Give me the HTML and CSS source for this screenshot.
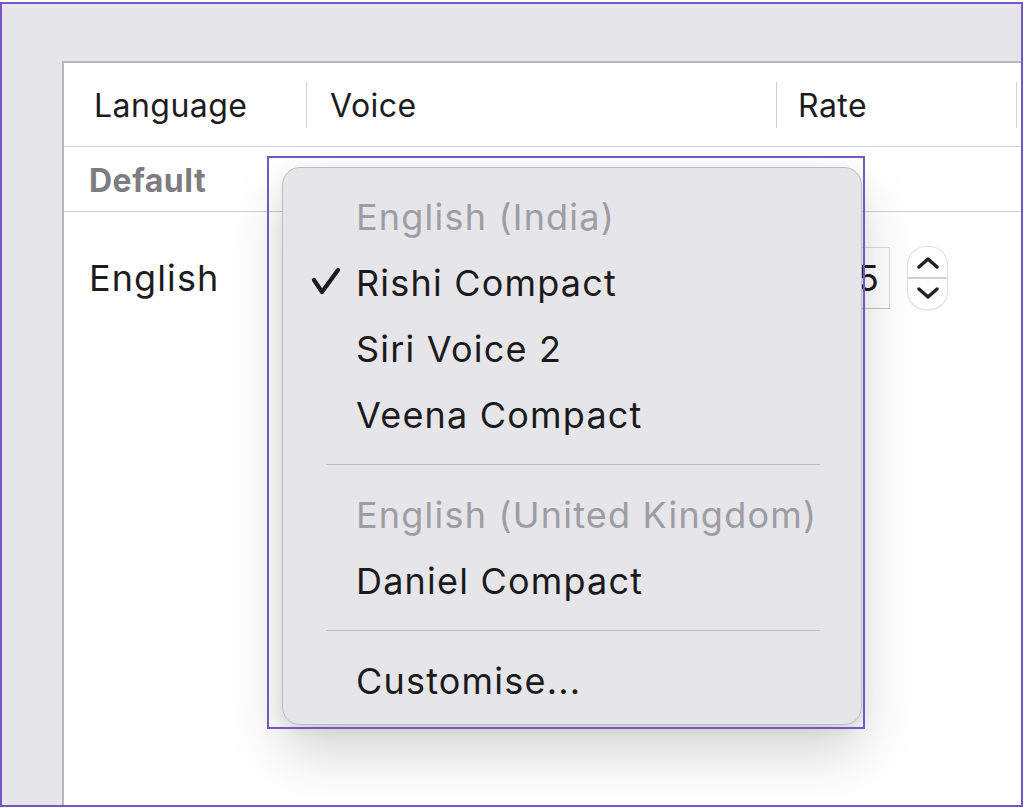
FILE: index.html
```html
<!DOCTYPE html>
<html lang="en">
<head>
<meta charset="utf-8">
<title>Voice settings</title>
<link rel="stylesheet" href="styles.css">
</head>
<body>
<div class="frame">
  <div class="panel">
    <div class="thead">
      <div class="th th-lang">Language</div>
      <div class="sep"></div>
      <div class="th th-voice">Voice</div>
      <div class="sep"></div>
      <div class="th th-rate">Rate</div>
      <div class="sep"></div>
      <div class="th th-rest"></div>
    </div>
    <div class="group-row">Default</div>
    <div class="row">
      <div class="cell-lang">English</div>
      <div class="cell-voice"></div>
      <div class="cell-rate">
        <div class="field">5</div>
        <div class="stepper">
          <div class="step step-up">
            <svg width="22" height="12" viewBox="0 0 22 12"><path d="M2 10 L11 2 L20 10" fill="none" stroke="#222" stroke-width="3.4" stroke-linecap="round" stroke-linejoin="round"/></svg>
          </div>
          <div class="step-div"></div>
          <div class="step step-down">
            <svg width="22" height="12" viewBox="0 0 22 12"><path d="M2 2 L11 10 L20 2" fill="none" stroke="#222" stroke-width="3.4" stroke-linecap="round" stroke-linejoin="round"/></svg>
          </div>
        </div>
      </div>
    </div>

    <div class="menu">
      <div class="item header">English (India)</div>
      <div class="item checked">
        <svg class="check" width="32" height="30" viewBox="0 0 32 30"><path d="M4 13 L12 25 L28 3" fill="none" stroke="#1c1c1e" stroke-width="4.2" stroke-linecap="round" stroke-linejoin="round"/></svg>
        Rishi Compact
      </div>
      <div class="item">Siri Voice 2</div>
      <div class="item">Veena Compact</div>
      <div class="menu-sep"></div>
      <div class="item header">English (United Kingdom)</div>
      <div class="item">Daniel Compact</div>
      <div class="menu-sep"></div>
      <div class="item">Customise...</div>
    </div>
    <div class="annot"></div>
  </div>
</div>
</body>
</html>
```

FILE: styles.css
```css
* { box-sizing: border-box; }
html, body { margin: 0; padding: 0; background: #ffffff; }
body {
  font-family: Inter, "Noto Sans", "Liberation Sans", sans-serif;
  color: #1c1c1e;
}
.frame {
  margin-top: 2px;
  width: 1023px;
  height: 805px;
  border: 2px solid #7656c2;
  background: #e5e5ea;
  padding: 57px 0 0 60px;
  overflow: hidden;
}
.panel {
  position: relative;
  width: 1000px;
  height: 744px;
  background: #ffffff;
  border-left: 2px solid #b6b6bc;
  border-top: 2px solid #b6b6bc;
}
.thead {
  display: flex;
  align-items: center;
  height: 84px;
  border-bottom: 1px solid #cfcfd4;
}
.th {
  font-size: 32px;
  font-weight: 400;
  color: #1c1c1e;
  letter-spacing: 0.45px;
  padding-top: 2px;
}
.th-lang { width: 242px; padding-left: 30px; }
.th-voice { width: 469px; padding-left: 23px; }
.th-rate { width: 239px; padding-left: 21px; }
.sep { width: 1px; height: 46px; background: #d2d2d6; }
.group-row {
  height: 65px;
  display: flex;
  align-items: center;
  padding-left: 25px;
  padding-top: 3px;
  font-size: 32px;
  font-weight: 700;
  letter-spacing: 0.5px;
  color: #7c7c81;
  border-bottom: 1px solid #cfcfd4;
}
.row {
  display: flex;
  align-items: center;
  height: 132px;
}
.cell-lang { width: 242px; padding-left: 25px; font-size: 36px; letter-spacing: 1.1px; }
.cell-voice { width: 470px; }
.cell-rate { display: flex; align-items: center; padding-left: 13px; }
.field {
  width: 101px;
  height: 62px;
  border: 1px solid #dcdce0;
  border-bottom-color: #c4c4c8;
  text-align: right;
  padding-right: 10px;
  font-size: 36px;
  line-height: 60px;
}
.stepper {
  margin-left: 18px;
  width: 39px;
  height: 62px;
  border-radius: 18px;
  background: #ffffff;
  box-shadow: 0 0 0 1px #e0e0e4, 0 1px 3px rgba(0,0,0,0.14);
  display: flex;
  flex-direction: column;
}
.step { flex: 1; display: flex; align-items: center; justify-content: center; }
.step-up { padding-top: 2px; }
.step-down { padding-bottom: 2px; }
.step-div { height: 2px; background: #d0d0d4; }

.menu {
  position: absolute;
  left: 218px;
  top: 104px;
  width: 580px;
  height: 558px;
  background: #e6e6ea;
  border: 1px solid #bcbcc1;
  border-radius: 18px;
  padding: 16px 0 0 0;
  box-shadow: 0 28px 56px rgba(0,0,0,0.17), 0 4px 16px rgba(0,0,0,0.07);
}
.item {
  position: relative;
  height: 66px;
  display: flex;
  align-items: center;
  padding-left: 73px;
  font-size: 36px;
  letter-spacing: 1.2px;
  color: #1a1a1c;
  white-space: nowrap;
}
.item.header { color: #9d9da2; }
.check { position: absolute; left: 27px; top: 17px; }
.menu-sep {
  height: 1px;
  margin: 16px 41px 17px 43px;
  background: #bdbdc2;
}
.annot {
  position: absolute;
  left: 203px;
  top: 93px;
  width: 598px;
  height: 573px;
  border: 2px solid #7656c2;
}
```
